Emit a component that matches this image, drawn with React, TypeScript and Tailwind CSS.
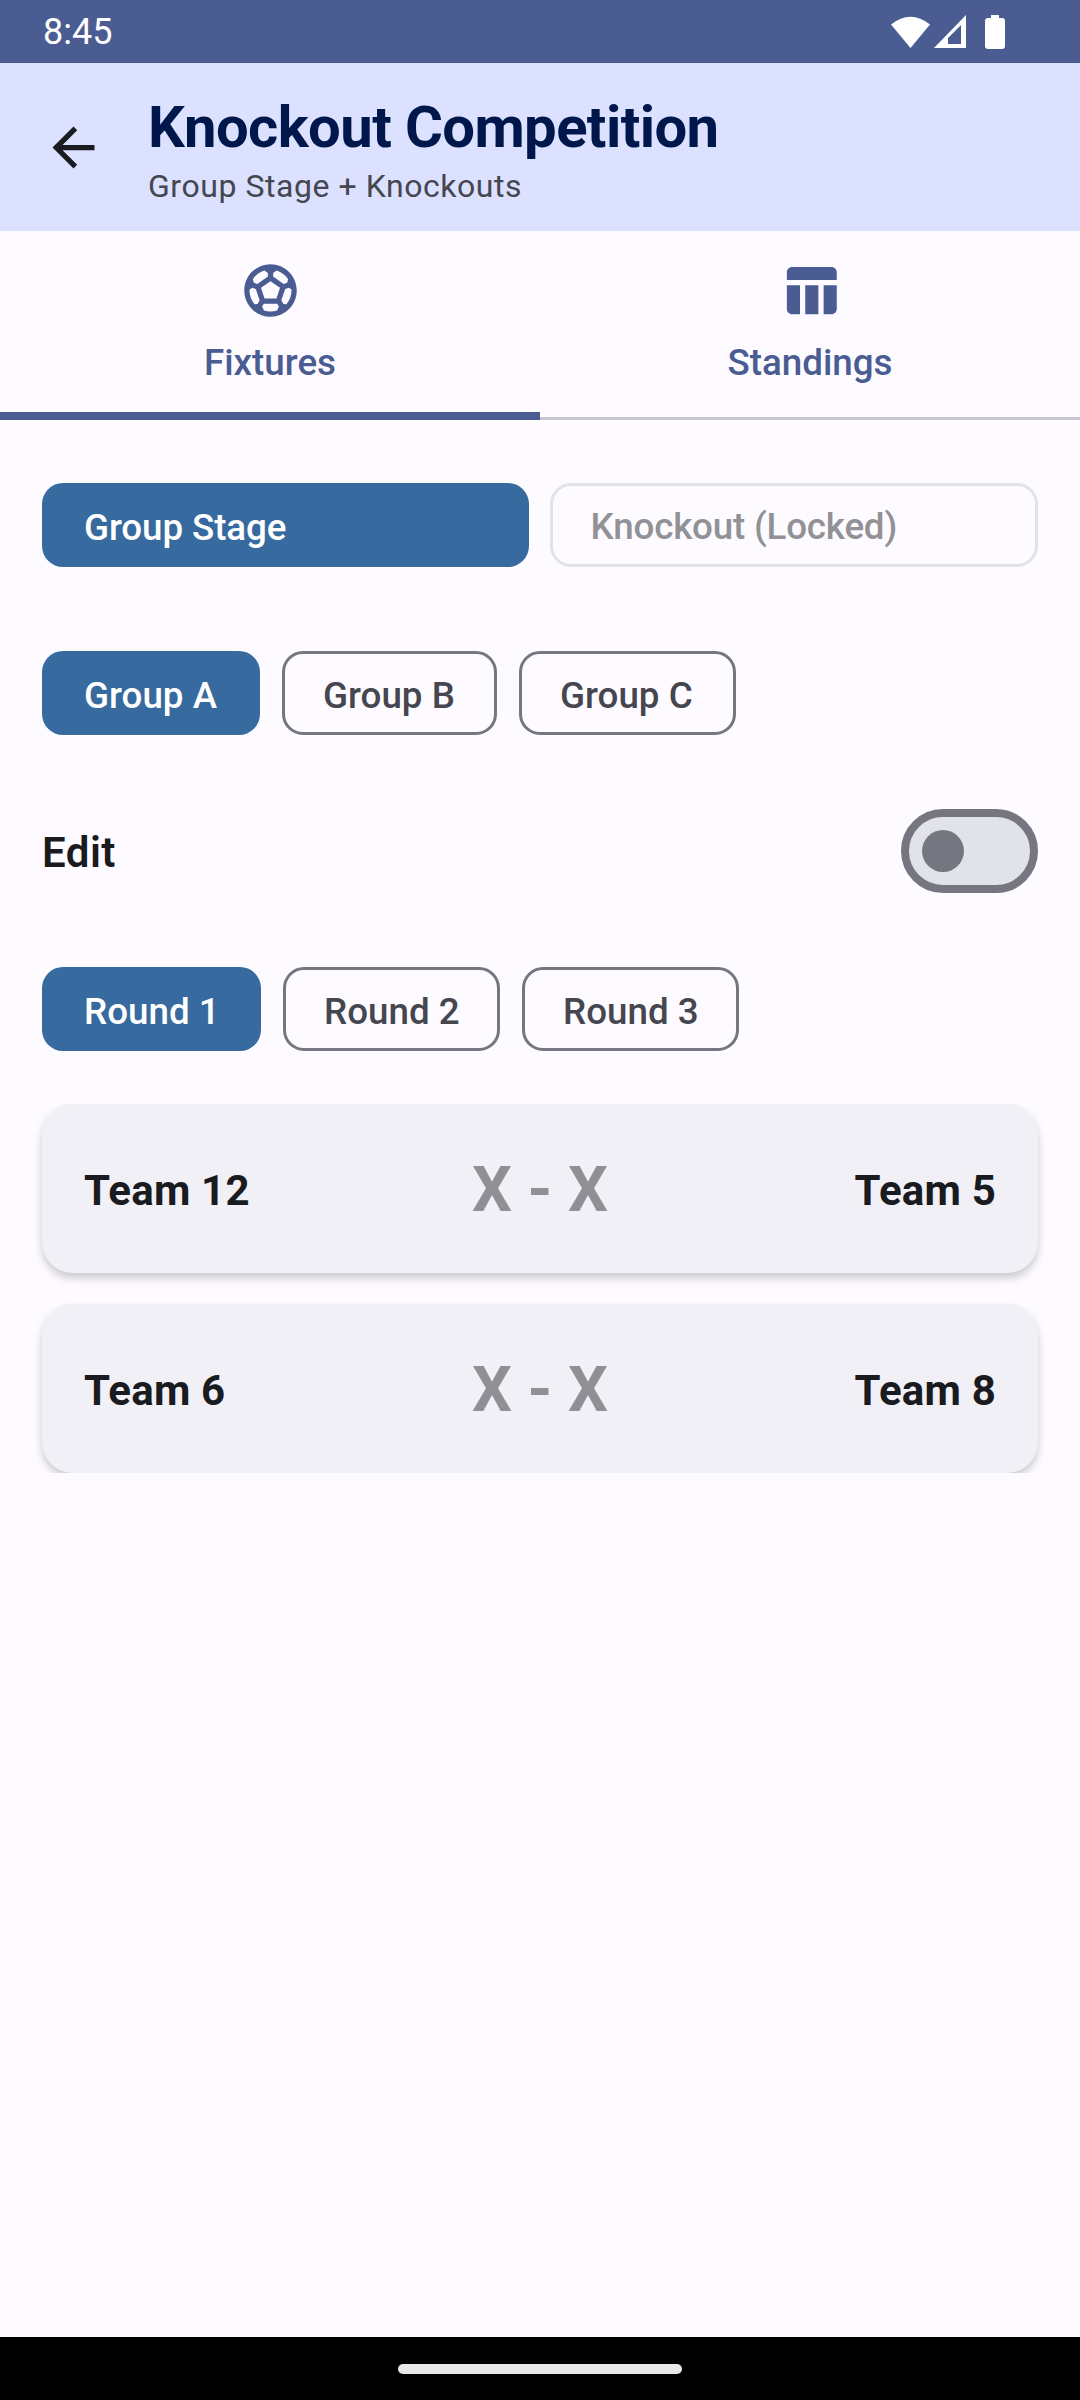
const PRIMARY = "bg-[#4a5c92]";

function StatusBar() {
  return (
    <div className={`h-[63px] ${PRIMARY} flex items-center justify-between pl-[43px] pr-[75px] text-white`}>
      <span className="text-[36px] leading-none font-normal">8:45</span>
      <div className="flex items-center gap-[4px]">
        <svg width="39" height="33" viewBox="0 0 39 33" fill="white">
          <path d="M19.5 33 L0 9.5 Q19.5 -6 39 9.5 Z" />
        </svg>
        <svg width="32" height="33" viewBox="0 0 32 33" fill="white" fillRule="evenodd">
          <path d="M32 0 V33 H0 Z M27 10 L14 23 V29 H27 Z" />
        </svg>
        <svg width="20" height="34" viewBox="0 0 20 34" fill="white" className="ml-[15px]">
          <path d="M6 0 H14 V3 H17 Q20 3 20 6 V31 Q20 34 17 34 H3 Q0 34 0 31 V6 Q0 3 3 3 H6 Z" />
        </svg>
      </div>
    </div>
  );
}

function Header() {
  return (
    <div className="h-[168px] bg-[#dbe1ff] flex items-center pl-[42px]">
      <svg width="63" height="63" viewBox="0 0 24 24" fill="#1a1b20" className="shrink-0">
        <path d="M20 11H7.83l5.59-5.59L12 4l-8 8 8 8 1.41-1.41L7.83 13H20v-2z" />
      </svg>
      <div className="ml-[43px] pt-[5px]">
        <div className="text-[58px] leading-[73px] tracking-[-0.6px] font-bold text-[#00174b]">Knockout Competition</div>
        <div className="text-[32px] leading-[44px] tracking-[0.55px] text-[#45464f]">Group Stage + Knockouts</div>
      </div>
    </div>
  );
}

function Tabs() {
  return (
    <div className="flex h-[189px]">
      <div className="flex-1 flex flex-col items-center pt-[28px] border-b-[8px] border-[#4a5c92] text-[#4a5c92]">
        <svg width="63" height="63" viewBox="0 0 24 24" fill="currentColor">
          <path d="M12 2C6.48 2 2 6.48 2 12s4.48 10 10 10 10-4.48 10-10S17.52 2 12 2zm1 3.3 1.35-.95c1.82.56 3.37 1.76 4.38 3.34l-.39 1.34-1.35.46L13 6.7V5.3zm-3.35-.95L11 5.3v1.4L7.01 9.49l-1.35-.46-.39-1.34c1.01-1.57 2.56-2.77 4.38-3.34zM7.08 17.11l-1.14.1C4.73 15.81 4 13.99 4 12c0-.12.01-.23.02-.35l1-.73 1.38.48 1.46 4.34-.78 1.37zm7.42 2.48c-.79.26-1.63.41-2.5.41s-1.71-.15-2.5-.41l-.69-1.49.64-1.1h5.11l.64 1.11-.7 1.48zM14.27 15H9.73l-1.35-4.02L12 8.44l3.63 2.54L14.27 15zm3.79 2.21-1.14-.1-.79-1.37 1.46-4.34 1.39-.47 1 .73c.01.11.02.22.02.34 0 1.99-.73 3.81-1.94 5.21z" />
        </svg>
        <span className="text-[36.75px] leading-[52px] font-medium mt-[15px]">Fixtures</span>
      </div>
      <div className="flex-1 flex flex-col items-center pt-[28px] border-b-[3px] border-[#c6c5d0] text-[#4a5c92]">
        <svg width="63" height="63" viewBox="0 0 24 24" fill="currentColor">
          <path d="M10 10.02h5V21h-5zM17 21h3c1.1 0 2-.9 2-2v-9h-5v11zm3-18H5c-1.1 0-2 .9-2 2v3h19V5c0-1.1-.9-2-2-2zM3 19c0 1.1.9 2 2 2h3V10H3v9z" />
        </svg>
        <span className="text-[36.75px] leading-[52px] font-medium mt-[15px]">Standings</span>
      </div>
    </div>
  );
}

function Chip({ label, active, className }: { label: string; active?: boolean; className?: string }) {
  return (
    <div
      className={`h-[84px] rounded-[21px] flex items-center pt-[5px] text-[36.75px] font-medium whitespace-nowrap ${
        active ? "bg-[#376a9e] text-white pl-[42px]" : "border-[3px] border-[#757680] text-[#45464f] pl-[38px] pt-[3px]"
      } ${className ?? ""}`}
    >
      {label}
    </div>
  );
}

function MatchCard({ home, away }: { home: string; away: string }) {
  return (
    <div className="h-[169px] shrink-0 rounded-[31px] bg-[#f0f0f6] shadow-[0_5px_8px_rgba(0,0,0,0.2)] grid grid-cols-[1fr_auto_1fr] items-center px-[42px] pt-[4px]">
      <span className="text-[42px] tracking-[0.2px] font-bold text-[#1a1b20]">{home}</span>
      <span className="text-[63px] font-bold text-[#8f9095]">X - X</span>
      <span className="text-[42px] tracking-[0.2px] font-bold text-[#1a1b20] text-right">{away}</span>
    </div>
  );
}

export default function App() {
  return (
    <div
      className="w-[1080px] h-[2400px] bg-[#fdfbff] flex flex-col overflow-hidden"
      style={{ fontFamily: "Roboto, sans-serif" }}
    >
      <StatusBar />
      <Header />
      <Tabs />

      <div className="flex gap-[21px] px-[42px] mt-[63px]">
        <Chip label="Group Stage" active className="flex-1 tracking-[-0.1px]" />
        <div className="flex-1 h-[84px] rounded-[21px] border-[3px] border-[#e3e2e8] flex items-center pl-[38px] pt-[3px] text-[36.75px] tracking-[-0.2px] font-medium text-[#919196] whitespace-nowrap">
          Knockout (Locked)
        </div>
      </div>

      <div className="flex gap-[22px] px-[42px] mt-[84px]">
        <Chip label="Group A" active className="w-[218px]" />
        <Chip label="Group B" className="w-[215px]" />
        <Chip label="Group C" className="w-[217px]" />
      </div>

      <div className="flex items-center justify-between px-[42px] mt-[74px]">
        <span className="text-[42px] tracking-[0.5px] pt-[3px] font-semibold text-[#1a1b20]">Edit</span>
        <div className="w-[137px] h-[84px] rounded-full border-[8px] border-[#757680] bg-[#e2e2e9] flex items-center pl-[13px]">
          <div className="w-[42px] h-[42px] rounded-full bg-[#757680]" />
        </div>
      </div>

      <div className="flex gap-[22px] px-[42px] mt-[74px]">
        <Chip label="Round 1" active className="w-[219px]" />
        <Chip label="Round 2" className="w-[217px]" />
        <Chip label="Round 3" className="w-[217px]" />
      </div>

      {/* list clips the cards top and bottom */}
      <div className="h-[369px] mt-[53px] overflow-hidden flex flex-col gap-[31px] px-[42px]">
        <MatchCard home="Team 12" away="Team 5" />
        <MatchCard home="Team 6" away="Team 8" />
      </div>

      <div className="mt-auto h-[63px] bg-black flex justify-center items-start pt-[27px]">
        <div className="w-[284px] h-[10px] rounded-full bg-[#e9e9e9]" />
      </div>
    </div>
  );
}
